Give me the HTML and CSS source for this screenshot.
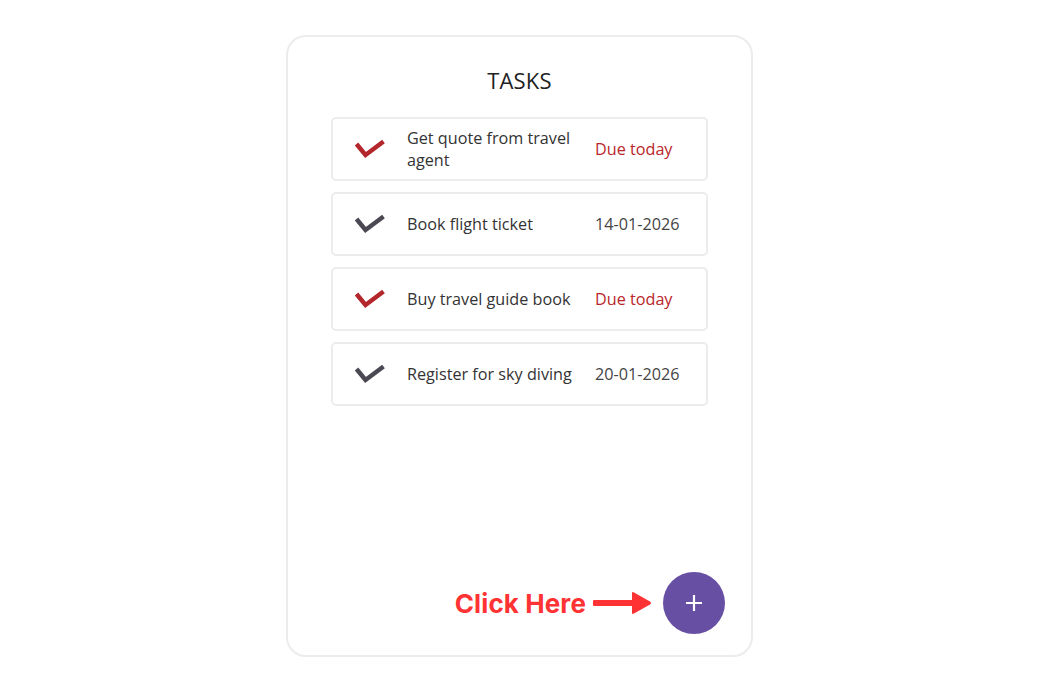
FILE: index.html
```html
<!DOCTYPE html>
<html lang="en">
<head>
    <meta charset="UTF-8">
    <meta name="viewport" content="width=device-width, initial-scale=1.0">
    <title>Tasks</title>
    <link rel="stylesheet" href="styles.css">
</head>
<body>
    <div class="card">
        <h1 class="title">TASKS</h1>

        <div class="task-list">
            <div class="task due">
                <svg class="check" viewBox="0 0 30 20"><polyline points="1.5,5 10.5,16 28.5,2.5"/></svg>
                <div class="task-name">Get quote from travel agent</div>
                <div class="task-date">Due today</div>
            </div>
            <div class="task">
                <svg class="check" viewBox="0 0 30 20"><polyline points="1.5,5 10.5,16 28.5,2.5"/></svg>
                <div class="task-name">Book flight ticket</div>
                <div class="task-date">14-01-2026</div>
            </div>
            <div class="task due">
                <svg class="check" viewBox="0 0 30 20"><polyline points="1.5,5 10.5,16 28.5,2.5"/></svg>
                <div class="task-name">Buy travel guide book</div>
                <div class="task-date">Due today</div>
            </div>
            <div class="task">
                <svg class="check" viewBox="0 0 30 20"><polyline points="1.5,5 10.5,16 28.5,2.5"/></svg>
                <div class="task-name">Register for sky diving</div>
                <div class="task-date">20-01-2026</div>
            </div>
        </div>

        <div class="footer">
            <span class="hint">Click Here</span>
            <svg class="arrow" viewBox="0 0 60 24">
                <rect x="0" y="9" width="42" height="6" rx="1"/>
                <path d="M39 2 Q39 0.5 41 1.5 L57 10.5 Q59 12 57 13.5 L41 22.5 Q39 23.5 39 22 Z"/>
            </svg>
            <button class="add-btn">
                <svg class="plus" viewBox="0 0 16 16"><path d="M8 0 V16 M0 8 H16"/></svg>
            </button>
        </div>
    </div>
</body>
</html>
```

FILE: styles.css
```css
body {
    margin: 0;
    padding-top: 35px;
    background-color: #fff;
    font-family: "Open Sans", Arial, sans-serif;
    color: #333;
}
.card {
    box-sizing: border-box;
    width: 467px;
    height: 622px;
    margin-left: 286px;
    border: 2px solid #ececec;
    border-radius: 20px;
    display: flex;
    flex-direction: column;
    align-items: center;
}
.title {
    margin: 28px 0 0;
    font-size: 22px;
    font-weight: 400;
    line-height: 30px;
    color: #222;
    letter-spacing: 0.2px;
}
.task-list {
    margin-top: 22px;
    width: 377px;
    display: flex;
    flex-direction: column;
    gap: 11px;
}
.task {
    box-sizing: border-box;
    min-height: 64px;
    padding: 8px 24px 8px 22px;
    border: 2px solid #ececec;
    border-radius: 5px;
    display: grid;
    grid-template-columns: 31px 1fr 87px;
    column-gap: 21px;
    align-items: center;
    font-size: 16.2px;
    line-height: 22px;
}
.check {
    width: 30px;
    height: 20px;
    fill: none;
    stroke: #4b4853;
    stroke-width: 4.5;
    stroke-linejoin: miter;
}
.task.due .check {
    stroke: #b3262b;
}
.task-name {
    color: #333;
}
.task-date {
    color: #444;
}
.task.due .task-date {
    color: #b9262b;
}
.footer {
    margin-top: auto;
    margin-bottom: 21px;
    align-self: flex-end;
    margin-right: 26px;
    display: flex;
    align-items: center;
}
.hint {
    font-family: Inter, Arial, sans-serif;
    font-weight: 700;
    font-size: 26px;
    color: #ff3333;
    letter-spacing: 0.1px;
}
.arrow {
    width: 60px;
    height: 24px;
    margin-left: 7px;
    margin-right: 10px;
    fill: #ff3333;
}
.add-btn {
    width: 62px;
    height: 62px;
    border-radius: 50%;
    border: none;
    background-color: #674fa3;
    padding: 0;
    display: flex;
    align-items: center;
    justify-content: center;
    cursor: pointer;
}
.plus {
    width: 16px;
    height: 16px;
    stroke: #fff;
    stroke-width: 2.2;
    fill: none;
}
```
